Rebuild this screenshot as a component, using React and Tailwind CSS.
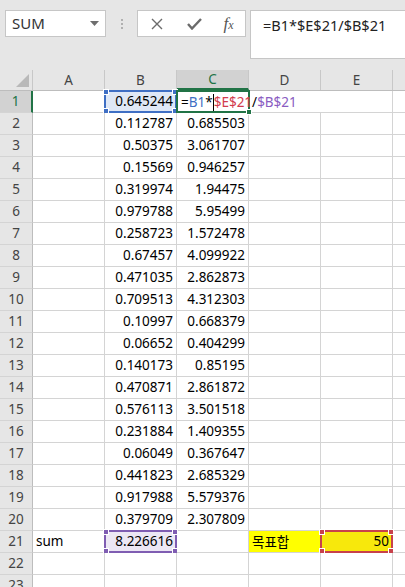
import React from "react";

const rows = [
  ["", "0.645244", "F"],
  ["", "0.112787", "0.685503"],
  ["", "0.50375", "3.061707"],
  ["", "0.15569", "0.946257"],
  ["", "0.319974", "1.94475"],
  ["", "0.979788", "5.95499"],
  ["", "0.258723", "1.572478"],
  ["", "0.67457", "4.099922"],
  ["", "0.471035", "2.862873"],
  ["", "0.709513", "4.312303"],
  ["", "0.10997", "0.668379"],
  ["", "0.06652", "0.404299"],
  ["", "0.140173", "0.85195"],
  ["", "0.470871", "2.861872"],
  ["", "0.576113", "3.501518"],
  ["", "0.231884", "1.409355"],
  ["", "0.06049", "0.367647"],
  ["", "0.441823", "2.685329"],
  ["", "0.917988", "5.579376"],
  ["", "0.379709", "2.307809"],
];

const font = { fontFamily: '"Noto Sans", "Noto Sans CJK KR", sans-serif' };

function Handles({ color }) {
  const c = "absolute w-[6px] h-[6px] border border-white";
  return (
    <>
      <span className={`${c} -left-[3px] -top-[3px]`} style={{ background: color }} />
      <span className={`${c} -right-[3px] -top-[3px]`} style={{ background: color }} />
      <span className={`${c} -left-[3px] -bottom-[3px]`} style={{ background: color }} />
      <span className={`${c} -right-[3px] -bottom-[3px]`} style={{ background: color }} />
    </>
  );
}

function Cell({ children, align = "right", className = "" }) {
  return (
    <div
      className={`relative w-[72px] h-[22px] shrink-0 border-r border-b border-[#d4d4d4] flex items-center px-[3px] text-[13.5px] text-black ${
        align === "right" ? "justify-end" : "justify-start"
      } ${className}`}
    >
      {children}
    </div>
  );
}

function RowHead({ n, active }) {
  return (
    <div
      className={`w-[33px] h-[22px] shrink-0 flex items-center justify-center text-[13.5px] border-b border-[#d4d4d4] ${
        active
          ? "bg-[#d2d2d2] text-[#217346] border-r-2 border-r-[#217346]"
          : "bg-[#e6e6e6] text-[#444] border-r border-r-[#bdbdbd]"
      }`}
    >
      {n}
    </div>
  );
}

export default function App() {
  return (
    <div className="w-[405px] h-[587px] overflow-hidden bg-white" style={font}>
      {/* toolbar */}
      <div className="h-[70px] bg-[#e6e6e6] flex items-start pt-[10px] pl-[5px]">
        <div className="w-[101px] h-[27px] bg-white border border-[#c6c6c6] flex items-center justify-between pl-[6px] pr-[6px]">
          <span className="text-[15px] text-[#333]">SUM</span>
          <svg width="9" height="5" viewBox="0 0 9 5"><path d="M0 0h9L4.5 5z" fill="#6e6e6e" /></svg>
        </div>
        <div className="w-[31px] h-[27px] flex flex-col items-center justify-center gap-[2px]">
          <span className="w-[2px] h-[2px] bg-[#b0b0b0]" />
          <span className="w-[2px] h-[2px] bg-[#b0b0b0]" />
          <span className="w-[2px] h-[2px] bg-[#b0b0b0]" />
        </div>
        <div className="w-[109px] h-[27px] bg-white border border-[#c6c6c6] flex items-center">
          <div className="w-[38px] flex justify-center">
            <svg width="12" height="12" viewBox="0 0 12 12"><path d="M1 1l10 10M11 1L1 11" stroke="#6b6b6b" strokeWidth="1.4" /></svg>
          </div>
          <div className="w-[36px] flex justify-center">
            <svg width="15" height="12" viewBox="0 0 15 12"><path d="M1 6l4 4.5L14 1" stroke="#6b6b6b" strokeWidth="2.4" fill="none" /></svg>
          </div>
          <div className="w-[33px] flex justify-center">
            <span className="text-[17px] italic text-[#555] leading-none" style={{ fontFamily: '"Liberation Serif", serif' }}>f<span className="text-[12px]">x</span></span>
          </div>
        </div>
        <div className="ml-[4px] flex-1 h-[49px] bg-white border border-[#c6c6c6] border-r-0 pl-[12px] pt-[2px]">
          <span className="text-[14.5px] text-[#222]">=B1*$E$21/$B$21</span>
        </div>
      </div>

      {/* column headers */}
      <div className="flex h-[21px] bg-[#e6e6e6] border-b border-[#bdbdbd]">
        <div className="w-[33px] shrink-0 relative border-r border-[#c8c8c8]">
          <svg className="absolute left-[16px] top-[4px]" width="13" height="13" viewBox="0 0 13 13"><path d="M13 0V13H0z" fill="#b9b9b9" /></svg>
        </div>
        {["A", "B", "C", "D", "E", ""].map((l, k) => (
          <div
            key={k}
            className={`w-[72px] shrink-0 flex items-center justify-center text-[13.5px] border-r border-[#c8c8c8] ${
              l === "C" ? "bg-[#d2d2d2] text-[#217346] border-b-2 border-b-[#217346]" : "text-[#444]"
            }`}
          >
            {l}
          </div>
        ))}
      </div>

      {/* rows */}
      {rows.map((r, i) => (
        <div key={i} className="flex">
          <RowHead n={i + 1} active={i === 0} />
          <Cell align="left">{r[0]}</Cell>
          {i === 0 ? (
            <Cell className="bg-[#dfe8f6]">
              <div className="absolute inset-[-1px] border-2 border-[#3f6fc4] pointer-events-none">
                <Handles color="#3f6fc4" />
              </div>
              <span className="relative">{r[1]}</span>
            </Cell>
          ) : (
            <Cell>{r[1]}</Cell>
          )}
          {i === 0 ? (
            <div className="relative w-[72px] h-[22px] shrink-0 border-b border-[#d4d4d4] bg-white z-10">
              <div className="absolute inset-[-1px] border-2 border-[#217346]">
                <span className="absolute -right-[4px] -bottom-[4px] w-[6px] h-[6px] bg-[#217346] border border-white" />
              </div>
              <div className="absolute left-[4px] top-0 h-[22px] flex items-center whitespace-nowrap text-[13.5px]">
                <span className="text-black">=</span>
                <span className="text-[#3f6fc4]">B1</span>
                <span className="text-black">*</span>
                <span className="w-px h-[17px] bg-black" />
                <span className="text-[#d23b4d]">$E$21</span>
                <span className="text-black">/</span>
                <span className="text-[#8a5cc2]">$B$21</span>
              </div>
            </div>
          ) : (
            <Cell>{r[2]}</Cell>
          )}
          <Cell className={i === 0 ? "border-r-0" : ""} />
          <Cell />
          <Cell />
        </div>
      ))}

      {/* row 21 */}
      <div className="flex">
        <RowHead n={21} />
        <Cell align="left">sum</Cell>
        <Cell className="bg-[#ece7f4]">
          <div className="absolute inset-[-1px] border-2 border-[#7f5db2] pointer-events-none">
            <Handles color="#7f5db2" />
          </div>
          <span className="relative">8.226616</span>
        </Cell>
        <Cell />
        <Cell align="left" className="bg-[#ffff00]" >
          <span style={{ fontFamily: '"Noto Sans CJK KR", sans-serif' }}>목표합</span>
        </Cell>
        <Cell className="bg-[#f7e80c]">
          <div className="absolute inset-[-1px] border-2 border-[#c8414b] pointer-events-none">
            <Handles color="#c8414b" />
          </div>
          <span className="relative">50</span>
        </Cell>
        <Cell />
      </div>
      {[22, 23].map((n) => (
        <div key={n} className="flex">
          <RowHead n={n} />
          <Cell />
          <Cell />
          <Cell />
          <Cell />
          <Cell />
          <Cell />
        </div>
      ))}
    </div>
  );
}
